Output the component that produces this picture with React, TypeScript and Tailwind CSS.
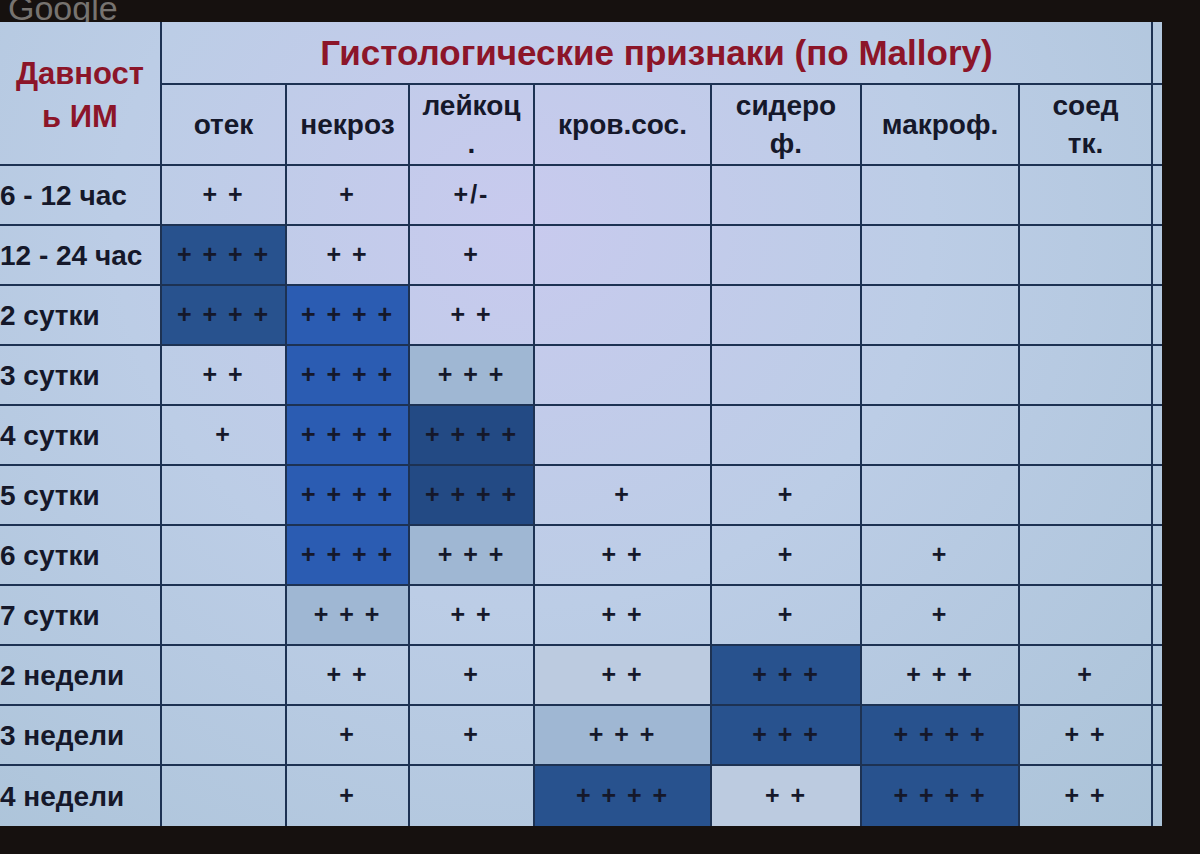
import React from 'react';

type Tone = 'n' | 'm' | 'l' | 'd' | 'b' | 'k';

// tone: n = plain, m = mid blue, l = pale, d = dark navy, b = bright blue, k = deep
const toneBg: Record<Tone, string> = {
    n: '',
    m: 'bg-[#9fb7d3]',
    l: 'bg-[#bccbe0]',
    d: 'bg-[#28528e]',
    b: 'bg-[#2b5cb2]',
    k: 'bg-[#234a84]',
};

const columns = [
    { label: ['отек'] },
    { label: ['некроз'] },
    { label: ['лейкоц', '.'] },
    { label: ['кров.сос.'] },
    { label: ['сидеро', 'ф.'] },
    { label: ['макроф.'] },
    { label: ['соед', 'тк.'] },
];

const rows: { label: string; cells: [string, Tone][] }[] = [
    { label: '6 - 12 час', cells: [['+ +', 'n'], ['+', 'n'], ['+/-', 'n'], ['', 'n'], ['', 'n'], ['', 'n'], ['', 'n']] },
    { label: '12 - 24 час', cells: [['+ + + +', 'd'], ['+ +', 'n'], ['+', 'n'], ['', 'n'], ['', 'n'], ['', 'n'], ['', 'n']] },
    { label: '2 сутки', cells: [['+ + + +', 'd'], ['+ + + +', 'b'], ['+ +', 'n'], ['', 'n'], ['', 'n'], ['', 'n'], ['', 'n']] },
    { label: '3 сутки', cells: [['+ +', 'n'], ['+ + + +', 'b'], ['+ + +', 'm'], ['', 'n'], ['', 'n'], ['', 'n'], ['', 'n']] },
    { label: '4 сутки', cells: [['+', 'n'], ['+ + + +', 'b'], ['+ + + +', 'k'], ['', 'n'], ['', 'n'], ['', 'n'], ['', 'n']] },
    { label: '5 сутки', cells: [['', 'n'], ['+ + + +', 'b'], ['+ + + +', 'k'], ['+', 'n'], ['+', 'n'], ['', 'n'], ['', 'n']] },
    { label: '6 сутки', cells: [['', 'n'], ['+ + + +', 'b'], ['+ + +', 'm'], ['+ +', 'n'], ['+', 'n'], ['+', 'n'], ['', 'n']] },
    { label: '7 сутки', cells: [['', 'n'], ['+ + +', 'm'], ['+ +', 'n'], ['+ +', 'n'], ['+', 'n'], ['+', 'n'], ['', 'n']] },
    { label: '2 недели', cells: [['', 'n'], ['+ +', 'n'], ['+', 'n'], ['+ +', 'l'], ['+ + +', 'd'], ['+ + +', 'n'], ['+', 'n']] },
    { label: '3 недели', cells: [['', 'n'], ['+', 'n'], ['+', 'n'], ['+ + +', 'm'], ['+ + +', 'd'], ['+ + + +', 'd'], ['+ +', 'n']] },
    { label: '4 недели', cells: [['', 'n'], ['+', 'n'], ['', 'n'], ['+ + + +', 'd'], ['+ +', 'l'], ['+ + + +', 'd'], ['+ +', 'n']] },
];

const line = 'border-[#1d3253]';

export default function App() {
    return (
        <div
            className="w-[1200px] h-[854px] bg-[#16110f] flex flex-col overflow-hidden text-[#15182a]"
            style={{ fontFamily: '"Liberation Sans", Arial, sans-serif' }}
        >
            {/* Dark strip above the slide */}
            <div className="h-[22px] overflow-hidden pl-[8px]">
                <div className="text-[34px] leading-none -mt-[9px] text-[#77736f]">Google</div>
            </div>

            <div className="flex">
                {/* Slide table */}
                <div className="w-[1162px] grid grid-cols-[162px_125px_123px_125px_177px_150px_158px_133px_9px] grid-rows-[63px_81px_repeat(11,60px)] bg-[radial-gradient(ellipse_at_45%_25%,#c8caee_0%,#bccde6_45%,#abc3d8_100%)]">
                    <div className={`row-span-2 border-r-2 border-b-2 ${line} flex flex-col items-center justify-center pt-[4px] text-[#8c1529] text-[31px] font-bold leading-[43px]`}>
                        <span>Давност</span>
                        <span>ь ИМ</span>
                    </div>
                    <div className={`col-span-7 border-r-2 border-b-2 ${line} flex items-center justify-center text-[#8c1529] text-[35px] font-bold pt-[2px]`}>
                        Гистологические признаки (по Mallory)
                    </div>
                    <div className={`border-b-2 ${line}`} />

                    {/* Column labels */}
                    {columns.map((col, idx) => (
                        <div
                            key={idx}
                            className={`border-r-2 border-b-2 ${line} flex flex-col items-center justify-center text-[28px] font-bold leading-[38px]`}
                        >
                            {col.label.map((l, i) => (
                                <span key={i}>{l}</span>
                            ))}
                        </div>
                    ))}
                    <div className={`border-b-2 ${line}`} />

                    {/* Data rows */}
                    {rows.map((row, rIdx) => (
                        <React.Fragment key={rIdx}>
                            <div className={`border-r-2 ${rIdx < rows.length - 1 ? 'border-b-2' : ''} ${line} flex items-center text-[28px] font-bold pt-[2px]`}>
                                {row.label}
                            </div>
                            {row.cells.map(([val, tone], cIdx) => (
                                <div
                                    key={cIdx}
                                    className={`border-r-2 ${rIdx < rows.length - 1 ? 'border-b-2' : ''} ${line} ${toneBg[tone]} flex items-center justify-center text-[25px] font-bold tracking-[2px] whitespace-pre`}
                                >
                                    {val}
                                </div>
                            ))}
                            <div className={`${rIdx < rows.length - 1 ? 'border-b-2' : ''} ${line}`} />
                        </React.Fragment>
                    ))}
                </div>
                <div className="flex-1" />
            </div>
        </div>
    );
}
